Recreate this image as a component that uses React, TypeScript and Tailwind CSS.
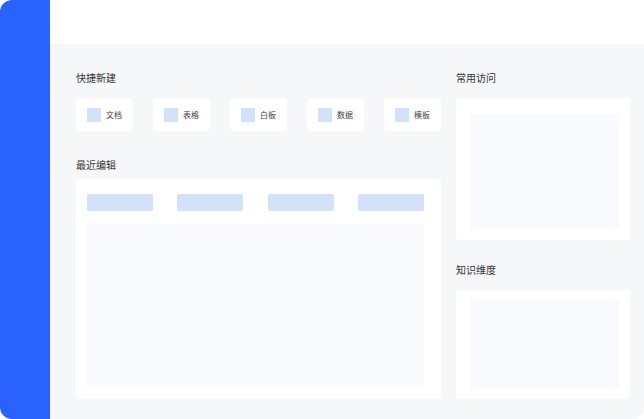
const quick = ["文档", "表格", "白板", "数据", "模板"];

function Title({ children, className = "" }: { children: React.ReactNode; className?: string }) {
  return <div className={`text-[10px] leading-[10px] text-[#333] ${className}`}>{children}</div>;
}

export default function App() {
  return (
    <div
      className="h-[419px] w-[644px] bg-white"
      style={{ fontFamily: '"Noto Sans CJK SC", "Noto Sans", sans-serif' }}
    >
      <div className="flex h-full w-full overflow-hidden rounded-[12px]">
        <aside className="w-[50px] shrink-0 bg-[#2962ff]" />
        <div className="flex flex-1 flex-col">
          <header className="h-[44px] shrink-0 bg-white" />
          <main className="flex flex-1 gap-[15px] bg-[#f6f7f9] pl-[26px] pt-[29px]">
            <section className="w-[365px]">
              <Title>快捷新建</Title>
              <div className="mt-[15px] flex gap-[20px]">
                {quick.map((q) => (
                  <div key={q} className="flex h-[33px] w-[57px] items-center gap-[5px] rounded-[4px] bg-white pl-[11px]">
                    <span className="h-[14px] w-[14px] bg-[#d3e1fa]" />
                    <span className="text-[8px] leading-none text-[#444]">{q}</span>
                  </div>
                ))}
              </div>
              <Title className="mt-[29px]">最近编辑</Title>
              <div className="mt-[9px] h-[220px] rounded-[3px] bg-white pl-[11px] pt-[15px]">
                <div className="flex w-[337px] justify-between">
                  {[0, 1, 2, 3].map((i) => (
                    <div key={i} className="h-[17px] w-[66px] rounded-[2px] bg-[#d3e1fa]" />
                  ))}
                </div>
                <div className="mt-[13px] h-[163px] w-[337px] bg-[#f9fafe]" />
              </div>
            </section>
            <section className="w-[174px]">
              <Title>常用访问</Title>
              <div className="mt-[15px] h-[142px] rounded-[3px] bg-white pl-[14px] pt-[16px]">
                <div className="h-[114px] w-[149px] bg-[#f9fafe]" />
              </div>
              <Title className="mt-[25px]">知识维度</Title>
              <div className="mt-[15px] h-[109px] rounded-[3px] bg-white pl-[14px] pt-[10px]">
                <div className="h-[88px] w-[149px] bg-[#f9fafe]" />
              </div>
            </section>
          </main>
        </div>
      </div>
    </div>
  );
}
